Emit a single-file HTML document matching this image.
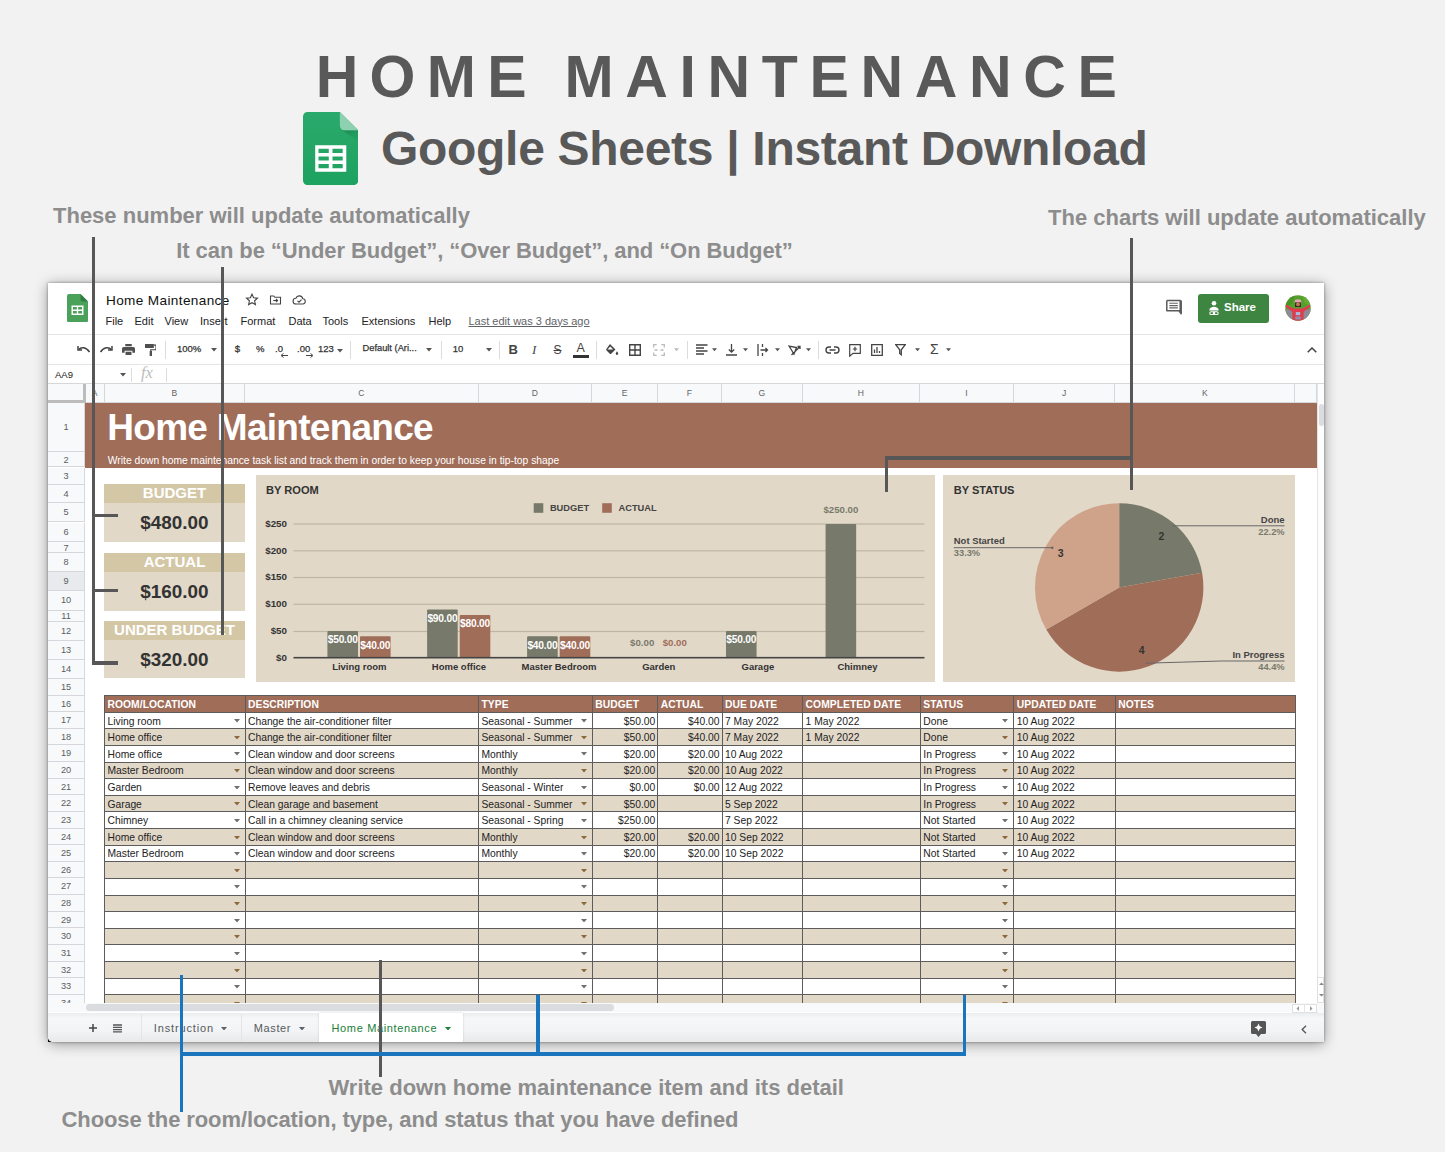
<!DOCTYPE html><html><head><meta charset="utf-8"><title>Home Maintenance</title><style>
*{box-sizing:border-box;margin:0;padding:0}
html,body{width:1445px;height:1152px;overflow:hidden}
body{background:#f2f2f2;font-family:"Liberation Sans",sans-serif;position:relative;color:#222}
.abs{position:absolute}
.t{position:absolute;white-space:nowrap;line-height:1}
.ann{position:absolute;white-space:nowrap;font-weight:bold;color:#8d8d8d;font-size:22px;line-height:1}
.ln{position:absolute;background:#575757}
.bl{position:absolute;background:#1b75bc}
#win{position:absolute;left:48px;top:283px;width:1276px;height:759px;background:#fff;box-shadow:0 0 3px rgba(0,0,0,.4),0 2px 14px rgba(0,0,0,.38);overflow:hidden;border-bottom-left-radius:5px}
#win .t{color:#222}
.menu{font-size:11px;color:#222;top:32.5px}
.hl{position:absolute;left:0;width:1276px;height:1px;background:#e3e5e8}
.rh{position:absolute;left:0;width:37px;background:#f8f9fa;border-bottom:1px solid #d5d7da;border-right:1px solid #d5d7da;color:#5a5d61;font-size:9.2px;text-align:center}
.ch{position:absolute;top:101px;height:19px;background:#f8f9fa;border-right:1px solid #d5d7da;border-bottom:1px solid #d5d7da;color:#5f6368;font-size:8.5px;text-align:center;line-height:18px}
.cardh{position:absolute;left:56px;width:141px;background:#d4c7a6;color:#fff;font-weight:bold;font-size:15px;text-align:center}
.cardb{position:absolute;left:56px;width:141px;background:#e2d8c8;color:#333;font-weight:bold;font-size:18.9px;text-align:center}
.cell{position:absolute;font-size:10.3px;white-space:nowrap;line-height:1;color:#222}
</style></head><body>
<div class="t" id="ttl" style="left:315.7px;top:48px;font-size:59px;font-weight:bold;color:#595959;letter-spacing:11.3px">HOME</div>
<div class="t" id="ttl2" style="left:564.5px;top:48px;font-size:59px;font-weight:bold;color:#595959;letter-spacing:11.65px">MAINTENANCE</div>
<svg class="abs" style="left:303px;top:111.6px" width="55.2" height="73.1" viewBox="0 0 55.2 73.1">
<defs><linearGradient id="gsh" x1="0" y1="0" x2="0" y2="1"><stop offset="0" stop-color="#2aa96c"/><stop offset="1" stop-color="#1ea25f"/></linearGradient>
<linearGradient id="gfd" x1="0.2" y1="0" x2="0.8" y2="1"><stop offset="0" stop-color="#137a45" stop-opacity=".55"/><stop offset="1" stop-color="#137a45" stop-opacity="0"/></linearGradient></defs>
<path d="M4.500 0H36.900L55.200 18.300V68.600a4.500 4.500 0 0 1-4.500 4.500H4.500a4.500 4.500 0 0 1-4.500-4.500V4.500a4.500 4.500 0 0 1 4.500-4.500z" fill="url(#gsh)"/>
<path d="M38.500 18.300H55.200V30L40 18.600z" fill="url(#gfd)"/>
<path d="M36.900 0L55.200 18.300H41.400a4.500 4.500 0 0 1-4.500-4.500z" fill="#8ed1b1"/>
<path d="M12.200 33.300h31.100v26.500H12.200zM15.500 36.800V41h10.300v-4.200zm14 0V41h10.200v-4.200zM15.500 44.500v4h10.300v-4zm14 0v4h10.200v-4zM15.500 52.100v4.100h10.300v-4.100zm14 0v4.100h10.200v-4.100z" fill="#fff" fill-rule="evenodd"/>
</svg>
<div class="t" id="sub" style="left:381px;top:125.2px;font-size:48px;font-weight:bold;color:#595959;letter-spacing:-0.3px">Google Sheets | Instant Download</div>
<div class="ann" id="a1" style="left:53px;top:205.4px">These number will update automatically</div>
<div class="ann" id="a2" style="left:176.3px;top:239.7px;letter-spacing:-0.08px">It can be “Under Budget”, “Over Budget”, and “On Budget”</div>
<div class="ann" id="a3" style="left:1048px;top:206.7px">The charts will update automatically</div>
<div class="ann" id="a4" style="left:328.5px;top:1077.4px">Write down home maintenance item and its detail</div>
<div class="ann" id="a5" style="left:61.5px;top:1108.5px;letter-spacing:-0.1px">Choose the room/location, type, and status that you have defined</div>
<div class="abs" style="left:48px;top:1036px;width:5px;height:6px;background:#111"></div>
<div id="win">
<svg class="abs" style="left:18.5px;top:10.7px" width="21" height="28.400" viewBox="0 0 21 28.400">
<path d="M2 0H13.5L21 7.5V26.400a2 2 0 0 1-2 2H2a2 2 0 0 1-2-2V2a2 2 0 0 1 2-2z" fill="#4aa25a"/>
<path d="M13.5 0L21 7.5H15.5a2 2 0 0 1-2-2z" fill="#2f7d42"/>
<path d="M4.500 11.500h12V21h-12zM6 13v2.600h3.800V13zm5.200 0v2.600H15V13zM6 16.900v2.600h3.800v-2.600zm5.200 0v2.600H15v-2.600z" fill="#fff" fill-rule="evenodd"/>
</svg>
<div class="t" id="doct" style="left:58px;top:10.8px;font-size:13.6px;color:#111;letter-spacing:0.36px">Home Maintenance</div>
<svg class="abs" style="left:196px;top:9px" width="70" height="16" viewBox="0 0 70 16" fill="none" stroke="#444" stroke-width="1.1">
<path d="M8 2.2l1.6 3.6 3.9.4-2.9 2.6.8 3.8L8 10.7l-3.4 1.9.8-3.8-2.9-2.6 3.9-.4z"/>
<path d="M26.5 4h3.2l1.2 1.3h5.600v6.700h-10z"/><path d="M29.200 8.500h4.300m-1.600-1.700l1.700 1.700-1.700 1.700"/>
<path d="M52 12h6.500a2.600 2.600 0 0 0 .3-5.200 3.600 3.600 0 0 0-6.900-.6A2.900 2.900 0 0 0 52 12z"/><path d="M53.500 8.800l1.500 1.400 2.500-2.600"/>
</svg>
<div class="t menu" style="left:57.5px">File</div>
<div class="t menu" style="left:86.5px">Edit</div>
<div class="t menu" style="left:116.5px">View</div>
<div class="t menu" style="left:152px">Insert</div>
<div class="t menu" style="left:192.5px">Format</div>
<div class="t menu" style="left:240.5px">Data</div>
<div class="t menu" style="left:274.5px">Tools</div>
<div class="t menu" style="left:313.5px">Extensions</div>
<div class="t menu" style="left:380.5px">Help</div>
<div class="t menu" style="left:420.5px;color:#5f6368;text-decoration:underline">Last edit was 3 days ago</div>
<svg class="abs" style="left:1117px;top:15.500px" width="18" height="17" viewBox="0 0 18 17"><path d="M1.800 1.500h13.400v10.300h-1.200l2.200 2.900v-13.200M1.800 1.500v10.300h12.200" fill="none" stroke="#5a5a5a" stroke-width="1.500" stroke-linejoin="round"/><path d="M4.300 4.300h8.600M4.300 6.600h8.600M4.300 8.900h8.600" stroke="#666" stroke-width="1.100"/></svg>
<div class="abs" style="left:1150px;top:11px;width:71px;height:28.500px;background:#3d8541;border-radius:3px"></div>
<svg class="abs" style="left:1159px;top:17px" width="14" height="16" viewBox="0 0 14 16" fill="#fff"><circle cx="7" cy="3.200" r="2.300"/><path d="M2.300 10.500c0-2.600 2.300-3.800 4.700-3.800s4.700 1.200 4.700 3.800z"/><path d="M4.200 11.300h5.600a1.900 1.900 0 0 1 0 3.800H4.200a1.900 1.900 0 0 1 0-3.800zm.1 1a.9.900 0 0 0 0 1.800h1.600v-1.800zm3.800 0v1.800h1.600a.9.900 0 0 0 0-1.800z" fill-rule="evenodd"/></svg>
<div class="t" style="left:1176px;top:19px;font-size:11.500px;font-weight:bold;color:#fff !important"><span style="color:#fff">Share</span></div>
<svg class="abs" style="left:1236.500px;top:12px" width="26" height="26" viewBox="0 0 26 26"><defs><clipPath id="av"><circle cx="13" cy="13" r="12.700"/></clipPath></defs><g clip-path="url(#av)"><rect width="26" height="26" fill="#55a02c"/><path d="M0 0h10l-3 9-7 3z" fill="#4a9424"/><path d="M17 0h9v11l-6-3z" fill="#63ad35"/><path d="M0 14l7 1 1 11H0z" fill="#8f8a96"/><path d="M26 14l-7 1-1 11h8z" fill="#8f8a96"/><path d="M1 9.500l7.500 4h9l7.500-4 .5 2-7 5.500V26h-11v-9L.5 11.500z" fill="#e23a50"/><path d="M10 9.500a3 3.400 0 0 1 6 0v2.500h-6z" fill="#3a2620"/><circle cx="13" cy="9.300" r="2" fill="#b9785a"/><path d="M9.300 7.200h7.400l-1.200-2.800h-5z" fill="#e9a3b4"/><rect x="10.800" y="17" width="4.400" height="3.200" fill="#a9b7dc"/><rect x="10.300" y="21.500" width="5.400" height="3" fill="#8d8fa8"/></g></svg>
<div class="hl" style="top:50.5px"></div>
<div class="hl" style="top:81px"></div>
<div class="hl" style="top:100px;background:#d5d7da"></div>
<svg class="abs" style="left:29px;top:61.5px" width="14" height="10" viewBox="0 0 14 10" fill="none" stroke="#444" stroke-width="1.500"><path d="M1.500 4.500C4 2 9 1.500 12.500 7"/><path d="M1 1v4h4" stroke-linejoin="miter"/></svg>
<svg class="abs" style="left:51px;top:61.5px" width="14" height="10" viewBox="0 0 14 10" fill="none" stroke="#444" stroke-width="1.500"><path d="M12.500 4.500C10 2 5 1.500 1.500 7"/><path d="M13 1v4h-4"/></svg>
<svg class="abs" style="left:73.7px;top:60.5px" width="13" height="11.200" viewBox="0 0 14 12" fill="#505050"><path d="M3.500 0h7v2.500h-7z"/><path d="M1.800 3.300h10.400a1.800 1.800 0 0 1 1.800 1.800v4.400h-2.800v-2.200h-8.400v2.200H0V5.100a1.800 1.800 0 0 1 1.800-1.800z"/><path d="M3.800 8.200h6.400V12H3.800z"/></svg>
<svg class="abs" style="left:97.3px;top:60.5px" width="11.200" height="12.200" viewBox="0 0 12 13" fill="#505050"><path d="M0 0h9.500v4.200H0z"/><path d="M9.500 1.200h2.300v5H6.200v2" fill="none" stroke="#444" stroke-width="1.200"/><path d="M5 7.500h2.500V13H5z"/></svg>
<div class="abs" style="left:116.5px;top:57.5px;width:1px;height:18px;background:#dadce0"></div>
<div class="t" style="left:129px;top:60.56px;font-size:9.5px;color:#333;-webkit-text-stroke:0.25px #333;">100%</div>
<svg class="abs" style="left:162.50px;top:65.00px" width="6" height="3.500" viewBox="0 0 6 3.500"><path d="M0 0h6L3 3.500z" fill="#555"/></svg>
<div class="abs" style="left:174px;top:57.5px;width:1px;height:18px;background:#dadce0"></div>
<div class="t" style="left:186.8px;top:60.51px;font-size:9.6px;color:#333;-webkit-text-stroke:0.25px #333;">$</div>
<div class="t" style="left:208px;top:60.56px;font-size:9.5px;color:#333;-webkit-text-stroke:0.25px #333;">%</div>
<div class="t" style="left:227px;top:60.56px;font-size:9.5px;color:#333;-webkit-text-stroke:0.25px #333;">.0</div>
<svg class="abs" style="left:232px;top:69.5px" width="8" height="5" viewBox="0 0 8 5"><path d="M8 2.500H2M3.500 0.500L1 2.500l2.500 2" fill="none" stroke="#444" stroke-width="1"/></svg>
<div class="t" style="left:249px;top:60.56px;font-size:9.5px;color:#333;-webkit-text-stroke:0.25px #333;">.00</div>
<svg class="abs" style="left:257.5px;top:69.5px" width="8" height="5" viewBox="0 0 8 5"><path d="M0 2.500h6M4.500 0.500L7 2.500l-2.500 2" fill="none" stroke="#444" stroke-width="1"/></svg>
<div class="t" style="left:270px;top:60.56px;font-size:9.5px;color:#333;-webkit-text-stroke:0.25px #333;">123</div>
<svg class="abs" style="left:288.50px;top:66.00px" width="6" height="3.500" viewBox="0 0 6 3.500"><path d="M0 0h6L3 3.500z" fill="#555"/></svg>
<div class="abs" style="left:302px;top:57.5px;width:1px;height:18px;background:#dadce0"></div>
<div class="t" style="left:314.5px;top:60.66px;font-size:9.3px;color:#333;-webkit-text-stroke:0.25px #333;">Default (Ari...</div>
<svg class="abs" style="left:378.20px;top:65.00px" width="6" height="3.500" viewBox="0 0 6 3.500"><path d="M0 0h6L3 3.500z" fill="#555"/></svg>
<div class="abs" style="left:392.5px;top:57.5px;width:1px;height:18px;background:#dadce0"></div>
<div class="t" style="left:404.7px;top:60.56px;font-size:9.5px;color:#333;-webkit-text-stroke:0.25px #333;">10</div>
<svg class="abs" style="left:438.00px;top:65.00px" width="6" height="3.500" viewBox="0 0 6 3.500"><path d="M0 0h6L3 3.500z" fill="#555"/></svg>
<div class="abs" style="left:451px;top:57.5px;width:1px;height:18px;background:#dadce0"></div>
<div class="t" style="left:460.5px;top:60.0px;font-size:13px;font-weight:bold;color:#444">B</div>
<div class="t" style="left:484px;top:60.0px;font-size:13px;font-style:italic;font-family:'Liberation Serif',serif;color:#444">I</div>
<div class="t" style="left:505.5px;top:60.5px;font-size:12px;color:#444;text-decoration:line-through">S</div>
<div class="t" style="left:528.5px;top:58.5px;font-size:12.500px;color:#444">A</div>
<div class="abs" style="left:525px;top:72.0px;width:16px;height:2.800px;background:#333"></div>
<div class="abs" style="left:548.4px;top:57.5px;width:1px;height:18px;background:#dadce0"></div>
<svg class="abs" style="left:556.5px;top:59.5px" width="14" height="13" viewBox="0 0 14 13"><path d="M5 1l5.500 5.500-4.300 4.200a1 1 0 0 1-1.400 0L1.400 7.300a1 1 0 0 1 0-1.400z" fill="#444"/><path d="M5.300 3.600L2.500 6.400h5.600z" fill="#fff"/><path d="M12 8.200s1.300 1.600 1.300 2.400a1.300 1.300 0 0 1-2.600 0c0-.8 1.300-2.400 1.300-2.400z" fill="#444"/></svg>
<svg class="abs" style="left:581px;top:60.5px" width="12" height="12" viewBox="0 0 12 12" fill="none" stroke="#444" stroke-width="1.400"><path d="M.7.700h10.600v10.600H.7zM6 .700v10.600M.7 6h10.600"/></svg>
<svg class="abs" style="left:605px;top:60.5px" width="12" height="12" viewBox="0 0 12 12" fill="none" stroke="#bbb" stroke-width="1.300"><path d="M.7 3.500V.700h3M8.300.700h3v2.800M.7 8.500v2.800h3M8.300 11.300h3V8.500M1.500 6h3M7.500 6h3"/></svg>
<svg class="abs" style="left:626.30px;top:65.00px" width="5" height="3.500" viewBox="0 0 6 3.500"><path d="M0 0h6L3 3.500z" fill="#bbb"/></svg>
<div class="abs" style="left:639.4px;top:57.5px;width:1px;height:18px;background:#dadce0"></div>
<svg class="abs" style="left:647.5px;top:61.0px" width="12" height="11" viewBox="0 0 12 11" stroke="#444" stroke-width="1.300"><path d="M0 1h11.500M0 4h8M0 7h11.500M0 10h8"/></svg>
<svg class="abs" style="left:663.90px;top:65.00px" width="5" height="3.500" viewBox="0 0 6 3.500"><path d="M0 0h6L3 3.500z" fill="#555"/></svg>
<svg class="abs" style="left:678px;top:60.5px" width="11" height="12" viewBox="0 0 11 12" fill="none" stroke="#444" stroke-width="1.300"><path d="M5.500 0v8M2.800 5.500l2.700 2.700 2.700-2.700M0 11h11"/></svg>
<svg class="abs" style="left:694.50px;top:65.00px" width="5" height="3.500" viewBox="0 0 6 3.500"><path d="M0 0h6L3 3.500z" fill="#555"/></svg>
<svg class="abs" style="left:709px;top:60.5px" width="12" height="12" viewBox="0 0 12 12" fill="none" stroke="#444" stroke-width="1.300"><path d="M1 0v12M5.500 0v3M5.500 9v3M3.500 6h7M8.500 4l2 2-2 2"/></svg>
<svg class="abs" style="left:726.50px;top:65.00px" width="5" height="3.500" viewBox="0 0 6 3.500"><path d="M0 0h6L3 3.500z" fill="#555"/></svg>
<svg class="abs" style="left:740px;top:60.5px" width="13" height="12" viewBox="0 0 13 12" fill="none" stroke="#444" stroke-width="1.300"><path d="M1 2l5 8 2.500-6.500zM3.500 11L12 2.500M9.500 2.500H12V5"/></svg>
<svg class="abs" style="left:757.50px;top:65.00px" width="5" height="3.500" viewBox="0 0 6 3.500"><path d="M0 0h6L3 3.500z" fill="#555"/></svg>
<div class="abs" style="left:769.5px;top:57.5px;width:1px;height:18px;background:#dadce0"></div>
<svg class="abs" style="left:777px;top:62.5px" width="15" height="8" viewBox="0 0 15 8" fill="none" stroke="#444" stroke-width="1.400"><path d="M6 1H4a3 3 0 0 0 0 6h2M9 1h2a3 3 0 0 1 0 6H9M4.500 4h6"/></svg>
<svg class="abs" style="left:801px;top:60.5px" width="12" height="13" viewBox="0 0 12 13" fill="none" stroke="#444" stroke-width="1.200"><path d="M.7.700h10.600v8.600H4L.7 12.200z"/><path d="M6 2.800v4.400M3.800 5h4.400"/></svg>
<svg class="abs" style="left:823px;top:60.5px" width="12" height="12" viewBox="0 0 12 12" fill="none" stroke="#444" stroke-width="1.300"><path d="M.7.700h10.600v10.600H.7z"/><path d="M3.500 9V5.500M6 9V3M8.500 9V7"/></svg>
<svg class="abs" style="left:847px;top:61.0px" width="11" height="12" viewBox="0 0 11 12" fill="none" stroke="#444" stroke-width="1.300"><path d="M.7.700h9.600L6.300 5.800v5L4.700 9.500V5.800z"/></svg>
<svg class="abs" style="left:866.50px;top:65.00px" width="5" height="3.500" viewBox="0 0 6 3.500"><path d="M0 0h6L3 3.500z" fill="#555"/></svg>
<div class="t" style="left:882px;top:59.0px;font-size:14px;color:#444">Σ</div>
<svg class="abs" style="left:898.00px;top:65.00px" width="5" height="3.500" viewBox="0 0 6 3.500"><path d="M0 0h6L3 3.500z" fill="#555"/></svg>
<svg class="abs" style="left:1259px;top:63.5px" width="10" height="6" viewBox="0 0 10 6" fill="none" stroke="#444" stroke-width="1.500"><path d="M.7 5.300L5 1l4.300 4.300"/></svg>
<div class="t" style="left:7px;top:87.0px;font-size:9.500px;color:#222">AA9</div>
<svg class="abs" style="left:71.50px;top:90.00px" width="6" height="3.500" viewBox="0 0 6 3.500"><path d="M0 0h6L3 3.500z" fill="#555"/></svg>
<div class="abs" style="left:83px;top:84.5px;width:1px;height:14px;background:#dadce0"></div>
<div class="t" style="left:93px;top:82.0px;font-size:16.500px;font-style:italic;font-family:'Liberation Serif',serif;color:#bbb"><span style="color:#bbb">fx</span></div>
<div class="abs" style="left:117.5px;top:84.5px;width:1px;height:14px;background:#dadce0"></div>
<div class="abs" style="left:0;top:100.5px;width:1276px;height:19.500px;background:#f8f9fa"></div>
<div class="abs" style="left:0;top:100.5px;width:37.500px;height:19.500px;background:#f8f9fa;border-right:3.500px solid #bcbcbc;border-bottom:3.500px solid #bcbcbc"></div>
<div class="ch" style="left:37.5px;width:19.0px;top:100.5px;height:19.500px">A</div>
<div class="ch" style="left:56.5px;width:140.5px;top:100.5px;height:19.500px">B</div>
<div class="ch" style="left:197px;width:233.5px;top:100.5px;height:19.500px">C</div>
<div class="ch" style="left:430.5px;width:113.8px;top:100.5px;height:19.500px">D</div>
<div class="ch" style="left:544.3px;width:65.5px;top:100.5px;height:19.500px">E</div>
<div class="ch" style="left:609.8px;width:64.2px;top:100.5px;height:19.500px">F</div>
<div class="ch" style="left:674px;width:80.6px;top:100.5px;height:19.500px">G</div>
<div class="ch" style="left:754.6px;width:117.7px;top:100.5px;height:19.500px">H</div>
<div class="ch" style="left:872.3px;width:93.5px;top:100.5px;height:19.500px">I</div>
<div class="ch" style="left:965.8px;width:101.5px;top:100.5px;height:19.500px">J</div>
<div class="ch" style="left:1067.3px;width:180.0px;top:100.5px;height:19.500px">K</div>
<div class="ch" style="left:1247.3px;width:21.7px;top:100.5px;height:19.500px"></div>
<div class="rh" style="top:120px;height:48.6px;line-height:49.1px;background:#f8f9fa">1</div>
<div class="rh" style="top:168.6px;height:15.9px;line-height:16.4px;background:#f8f9fa">2</div>
<div class="rh" style="top:184.5px;height:17.0px;line-height:17.5px;background:#f8f9fa">3</div>
<div class="rh" style="top:201.5px;height:18.7px;line-height:19.2px;background:#f8f9fa">4</div>
<div class="rh" style="top:220.2px;height:19.3px;line-height:19.8px;background:#f8f9fa">5</div>
<div class="rh" style="top:239.5px;height:19.2px;line-height:19.7px;background:#f8f9fa">6</div>
<div class="rh" style="top:258.7px;height:11.5px;line-height:12.0px;background:#f8f9fa">7</div>
<div class="rh" style="top:270.2px;height:18.8px;line-height:19.3px;background:#f8f9fa">8</div>
<div class="rh" style="top:289px;height:19.2px;line-height:19.7px;background:#e8eaed">9</div>
<div class="rh" style="top:308.2px;height:19.4px;line-height:19.9px;background:#f8f9fa">10</div>
<div class="rh" style="top:327.6px;height:11.0px;line-height:11.5px;background:#f8f9fa">11</div>
<div class="rh" style="top:338.6px;height:19.0px;line-height:19.5px;background:#f8f9fa">12</div>
<div class="rh" style="top:357.6px;height:19.0px;line-height:19.5px;background:#f8f9fa">13</div>
<div class="rh" style="top:376.6px;height:19.1px;line-height:19.6px;background:#f8f9fa">14</div>
<div class="rh" style="top:395.7px;height:16.9px;line-height:17.4px;background:#f8f9fa">15</div>
<div class="rh" style="top:412.6px;height:16.62px;line-height:17.12px;background:#f8f9fa">16</div>
<div class="rh" style="top:429.22px;height:16.62px;line-height:17.12px;background:#f8f9fa">17</div>
<div class="rh" style="top:445.84px;height:16.62px;line-height:17.12px;background:#f8f9fa">18</div>
<div class="rh" style="top:462.46px;height:16.62px;line-height:17.12px;background:#f8f9fa">19</div>
<div class="rh" style="top:479.08px;height:16.62px;line-height:17.12px;background:#f8f9fa">20</div>
<div class="rh" style="top:495.7px;height:16.62px;line-height:17.12px;background:#f8f9fa">21</div>
<div class="rh" style="top:512.32px;height:16.62px;line-height:17.12px;background:#f8f9fa">22</div>
<div class="rh" style="top:528.94px;height:16.62px;line-height:17.12px;background:#f8f9fa">23</div>
<div class="rh" style="top:545.56px;height:16.62px;line-height:17.12px;background:#f8f9fa">24</div>
<div class="rh" style="top:562.18px;height:16.62px;line-height:17.12px;background:#f8f9fa">25</div>
<div class="rh" style="top:578.8px;height:16.62px;line-height:17.12px;background:#f8f9fa">26</div>
<div class="rh" style="top:595.42px;height:16.62px;line-height:17.12px;background:#f8f9fa">27</div>
<div class="rh" style="top:612.04px;height:16.62px;line-height:17.12px;background:#f8f9fa">28</div>
<div class="rh" style="top:628.66px;height:16.62px;line-height:17.12px;background:#f8f9fa">29</div>
<div class="rh" style="top:645.28px;height:16.62px;line-height:17.12px;background:#f8f9fa">30</div>
<div class="rh" style="top:661.9px;height:16.62px;line-height:17.12px;background:#f8f9fa">31</div>
<div class="rh" style="top:678.52px;height:16.62px;line-height:17.12px;background:#f8f9fa">32</div>
<div class="rh" style="top:695.14px;height:16.62px;line-height:17.12px;background:#f8f9fa">33</div>
<div class="rh" style="top:711.76px;height:16.62px;line-height:17.12px;background:#f8f9fa">34</div>
<div class="abs" style="left:37px;top:120.3px;width:1232px;height:64.70px;background:#a06d59"></div>
<div class="t" id="bt" style="left:59.3px;top:126.3px;font-size:37px;font-weight:bold;letter-spacing:-0.72px"><span style="color:#fff">Home Maintenance</span></div>
<div class="t" id="bs" style="left:59.8px;top:172.8px;font-size:10.300px"><span style="color:#fff">Write down home maintenance task list and track them in order to keep your house in tip-top shape</span></div>
<div class="cardh" style="top:201px;height:19.2px;line-height:18.2px">BUDGET</div>
<div class="cardb" style="top:220.2px;height:38.8px;line-height:39.8px">$480.00</div>
<div class="cardh" style="top:270.2px;height:18.8px;line-height:17.8px">ACTUAL</div>
<div class="cardb" style="top:289px;height:38.7px;line-height:39.7px">$160.00</div>
<div class="cardh" style="top:338.2px;height:19.0px;line-height:18.0px">UNDER BUDGET</div>
<div class="cardb" style="top:357.2px;height:38.1px;line-height:39.1px">$320.00</div>
<svg class="abs" style="left:207.5px;top:191.8px" width="679.20" height="207.20" viewBox="255.5 474.8 679.20 207.20" font-family="Liberation Sans, sans-serif" font-weight="bold"><rect x="255.5" y="474.8" width="679.20" height="207.20" fill="#e2d8c8"/><text x="265.500" y="493.700" font-size="11.100" fill="#333">BY ROOM</text><rect x="533.200" y="503" width="9.600" height="9.600" fill="#777a6a"/><text x="549.400" y="510.600" font-size="9.300" fill="#444">BUDGET</text><rect x="601.700" y="503" width="9.600" height="9.600" fill="#a06d59"/><text x="618" y="510.600" font-size="9.300" fill="#444">ACTUAL</text><rect x="293" y="523.20" width="631" height="1.200" fill="#beb5a4"/><text x="286.500" y="526.80" font-size="9.800" fill="#333" text-anchor="end">$250</text><rect x="293" y="550.00" width="631" height="1.200" fill="#beb5a4"/><text x="286.500" y="553.60" font-size="9.800" fill="#333" text-anchor="end">$200</text><rect x="293" y="576.70" width="631" height="1.200" fill="#beb5a4"/><text x="286.500" y="580.30" font-size="9.800" fill="#333" text-anchor="end">$150</text><rect x="293" y="603.50" width="631" height="1.200" fill="#beb5a4"/><text x="286.500" y="607.10" font-size="9.800" fill="#333" text-anchor="end">$100</text><rect x="293" y="630.70" width="631" height="1.200" fill="#beb5a4"/><text x="286.500" y="634.30" font-size="9.800" fill="#333" text-anchor="end">$50</text><text x="286.500" y="660.50" font-size="9.800" fill="#333" text-anchor="end">$0</text><text x="358.8" y="670.200" font-size="9.500" fill="#333" text-anchor="middle">Living room</text><rect x="326.90" y="630.76" width="30.60" height="26.74" rx="1" fill="#777a6a"/><text x="342.20" y="643.06" font-size="10.200" fill="#fff" text-anchor="middle" letter-spacing="-0.2">$50.00</text><rect x="359.50" y="636.11" width="30.60" height="21.39" rx="1" fill="#a06d59"/><text x="374.80" y="648.41" font-size="10.200" fill="#fff" text-anchor="middle" letter-spacing="-0.2">$40.00</text><text x="458.5" y="670.200" font-size="9.500" fill="#333" text-anchor="middle">Home office</text><rect x="426.60" y="609.37" width="30.60" height="48.13" rx="1" fill="#777a6a"/><text x="441.90" y="621.67" font-size="10.200" fill="#fff" text-anchor="middle" letter-spacing="-0.2">$90.00</text><rect x="459.20" y="614.72" width="30.60" height="42.78" rx="1" fill="#a06d59"/><text x="474.50" y="627.02" font-size="10.200" fill="#fff" text-anchor="middle" letter-spacing="-0.2">$80.00</text><text x="558.5" y="670.200" font-size="9.500" fill="#333" text-anchor="middle">Master Bedroom</text><rect x="526.60" y="636.11" width="30.60" height="21.39" rx="1" fill="#777a6a"/><text x="541.90" y="648.41" font-size="10.200" fill="#fff" text-anchor="middle" letter-spacing="-0.2">$40.00</text><rect x="559.20" y="636.11" width="30.60" height="21.39" rx="1" fill="#a06d59"/><text x="574.50" y="648.41" font-size="10.200" fill="#fff" text-anchor="middle" letter-spacing="-0.2">$40.00</text><text x="658.3" y="670.200" font-size="9.500" fill="#333" text-anchor="middle">Garden</text><text x="641.70" y="646.200" font-size="9.700" fill="#777a6a" text-anchor="middle">$0.00</text><text x="674.30" y="646.200" font-size="9.700" fill="#a06d59" text-anchor="middle">$0.00</text><text x="757.4" y="670.200" font-size="9.500" fill="#333" text-anchor="middle">Garage</text><rect x="725.50" y="630.76" width="30.60" height="26.74" rx="1" fill="#777a6a"/><text x="740.80" y="643.06" font-size="10.200" fill="#fff" text-anchor="middle" letter-spacing="-0.2">$50.00</text><text x="857" y="670.200" font-size="9.500" fill="#333" text-anchor="middle">Chimney</text><rect x="825.10" y="523.80" width="30.60" height="133.70" rx="1" fill="#777a6a"/><text x="840.40" y="513.100" font-size="9.650" fill="#777a6a" text-anchor="middle">$250.00</text><rect x="293" y="656.700" width="631" height="1.600" fill="#444"/></svg>
<svg class="abs" style="left:895.2px;top:191.8px" width="352.10" height="207.20" viewBox="943.2 474.8 352.10 207.20" font-family="Liberation Sans, sans-serif" font-weight="bold"><rect x="943.2" y="474.8" width="352.10" height="207.20" fill="#e2d8c8"/><text x="954" y="493.700" font-size="11.050" fill="#333">BY STATUS</text><path d="M1119.4 587.3L1119.40 503.10A84.2 84.2 0 0 1 1202.32 572.68z" fill="#777a6a"/><path d="M1119.4 587.3L1202.32 572.68A84.2 84.2 0 0 1 1046.48 629.40z" fill="#a06d59"/><path d="M1119.4 587.3L1046.48 629.40A84.2 84.2 0 0 1 1119.40 503.10z" fill="#cfa28a"/><text x="1161.700" y="540" font-size="10.500" fill="#333" text-anchor="middle">2</text><text x="1061" y="557.200" font-size="10.500" fill="#333" text-anchor="middle">3</text><text x="1142" y="654.200" font-size="10.500" fill="#333" text-anchor="middle">4</text><text x="1284.800" y="523.300" font-size="9.500" fill="#444" text-anchor="end">Done</text><path d="M1173 525.600H1284.800" stroke="#666" stroke-width="1"/><text x="1284.800" y="535.200" font-size="9.300" fill="#777a6a" text-anchor="end">22.2%</text><text x="1284.800" y="658" font-size="9.500" fill="#444" text-anchor="end">In Progress</text><path d="M1146 663L1222 660.800H1284.800" stroke="#666" stroke-width="1" fill="none"/><text x="1284.800" y="670" font-size="9.300" fill="#777a6a" text-anchor="end">44.4%</text><text x="954" y="543.800" font-size="9.450" fill="#444">Not Started</text><path d="M954 547.500H1052.500" stroke="#666" stroke-width="1"/><circle cx="1052.500" cy="547.500" r="1.200" fill="#666"/><text x="954" y="555.700" font-size="9.300" fill="#777a6a">33.3%</text></svg>
<div class="abs" style="left:56.5px;top:412.6px;width:1190.80px;height:17.12px;background:#a06d59"></div>
<div class="cell" style="left:59.5px;top:416.8px;font-weight:bold;font-size:10.300px;letter-spacing:0.05px"><span style="color:#fff">ROOM/LOCATION</span></div>
<div class="cell" style="left:200px;top:416.8px;font-weight:bold;font-size:10.300px;letter-spacing:0.05px"><span style="color:#fff">DESCRIPTION</span></div>
<div class="cell" style="left:433.5px;top:416.8px;font-weight:bold;font-size:10.300px;letter-spacing:0.05px"><span style="color:#fff">TYPE</span></div>
<div class="cell" style="left:547.3px;top:416.8px;font-weight:bold;font-size:10.300px;letter-spacing:0.05px"><span style="color:#fff">BUDGET</span></div>
<div class="cell" style="left:612.8px;top:416.8px;font-weight:bold;font-size:10.300px;letter-spacing:0.05px"><span style="color:#fff">ACTUAL</span></div>
<div class="cell" style="left:677px;top:416.8px;font-weight:bold;font-size:10.300px;letter-spacing:0.05px"><span style="color:#fff">DUE DATE</span></div>
<div class="cell" style="left:757.6px;top:416.8px;font-weight:bold;font-size:10.300px;letter-spacing:0.05px"><span style="color:#fff">COMPLETED DATE</span></div>
<div class="cell" style="left:875.3px;top:416.8px;font-weight:bold;font-size:10.300px;letter-spacing:0.05px"><span style="color:#fff">STATUS</span></div>
<div class="cell" style="left:968.8px;top:416.8px;font-weight:bold;font-size:10.300px;letter-spacing:0.05px"><span style="color:#fff">UPDATED DATE</span></div>
<div class="cell" style="left:1070.3px;top:416.8px;font-weight:bold;font-size:10.300px;letter-spacing:0.05px"><span style="color:#fff">NOTES</span></div>
<svg class="abs" style="left:186.00px;top:436.22px" width="6" height="3.500" viewBox="0 0 6 3.500"><path d="M0 0h6L3 3.500z" fill="#707070"/></svg>
<svg class="abs" style="left:532.50px;top:436.22px" width="6" height="3.500" viewBox="0 0 6 3.500"><path d="M0 0h6L3 3.500z" fill="#707070"/></svg>
<svg class="abs" style="left:954.00px;top:436.22px" width="6" height="3.500" viewBox="0 0 6 3.500"><path d="M0 0h6L3 3.500z" fill="#707070"/></svg>
<div class="cell" style="left:59.50px;top:433.52px">Living room</div>
<div class="cell" style="left:200.00px;top:433.52px">Change the air-conditioner filter</div>
<div class="cell" style="left:433.50px;top:433.52px">Seasonal - Summer</div>
<div class="cell" style="right:668.70px;top:433.52px">$50.00</div>
<div class="cell" style="right:604.50px;top:433.52px">$40.00</div>
<div class="cell" style="left:677.00px;top:433.52px">7 May 2022</div>
<div class="cell" style="left:757.60px;top:433.52px">1 May 2022</div>
<div class="cell" style="left:875.30px;top:433.52px">Done</div>
<div class="cell" style="left:968.80px;top:433.52px">10 Aug 2022</div>
<div class="abs" style="left:56.5px;top:445.84px;width:1190.80px;height:16.92px;background:#e2d8c8"></div>
<svg class="abs" style="left:186.00px;top:452.84px" width="6" height="3.500" viewBox="0 0 6 3.500"><path d="M0 0h6L3 3.500z" fill="#8a6a3a"/></svg>
<svg class="abs" style="left:532.50px;top:452.84px" width="6" height="3.500" viewBox="0 0 6 3.500"><path d="M0 0h6L3 3.500z" fill="#8a6a3a"/></svg>
<svg class="abs" style="left:954.00px;top:452.84px" width="6" height="3.500" viewBox="0 0 6 3.500"><path d="M0 0h6L3 3.500z" fill="#8a6a3a"/></svg>
<div class="cell" style="left:59.50px;top:450.14px">Home office</div>
<div class="cell" style="left:200.00px;top:450.14px">Change the air-conditioner filter</div>
<div class="cell" style="left:433.50px;top:450.14px">Seasonal - Summer</div>
<div class="cell" style="right:668.70px;top:450.14px">$50.00</div>
<div class="cell" style="right:604.50px;top:450.14px">$40.00</div>
<div class="cell" style="left:677.00px;top:450.14px">7 May 2022</div>
<div class="cell" style="left:757.60px;top:450.14px">1 May 2022</div>
<div class="cell" style="left:875.30px;top:450.14px">Done</div>
<div class="cell" style="left:968.80px;top:450.14px">10 Aug 2022</div>
<svg class="abs" style="left:186.00px;top:469.46px" width="6" height="3.500" viewBox="0 0 6 3.500"><path d="M0 0h6L3 3.500z" fill="#707070"/></svg>
<svg class="abs" style="left:532.50px;top:469.46px" width="6" height="3.500" viewBox="0 0 6 3.500"><path d="M0 0h6L3 3.500z" fill="#707070"/></svg>
<svg class="abs" style="left:954.00px;top:469.46px" width="6" height="3.500" viewBox="0 0 6 3.500"><path d="M0 0h6L3 3.500z" fill="#707070"/></svg>
<div class="cell" style="left:59.50px;top:466.76px">Home office</div>
<div class="cell" style="left:200.00px;top:466.76px">Clean window and door screens</div>
<div class="cell" style="left:433.50px;top:466.76px">Monthly</div>
<div class="cell" style="right:668.70px;top:466.76px">$20.00</div>
<div class="cell" style="right:604.50px;top:466.76px">$20.00</div>
<div class="cell" style="left:677.00px;top:466.76px">10 Aug 2022</div>
<div class="cell" style="left:875.30px;top:466.76px">In Progress</div>
<div class="cell" style="left:968.80px;top:466.76px">10 Aug 2022</div>
<div class="abs" style="left:56.5px;top:479.08px;width:1190.80px;height:16.92px;background:#e2d8c8"></div>
<svg class="abs" style="left:186.00px;top:486.08px" width="6" height="3.500" viewBox="0 0 6 3.500"><path d="M0 0h6L3 3.500z" fill="#8a6a3a"/></svg>
<svg class="abs" style="left:532.50px;top:486.08px" width="6" height="3.500" viewBox="0 0 6 3.500"><path d="M0 0h6L3 3.500z" fill="#8a6a3a"/></svg>
<svg class="abs" style="left:954.00px;top:486.08px" width="6" height="3.500" viewBox="0 0 6 3.500"><path d="M0 0h6L3 3.500z" fill="#8a6a3a"/></svg>
<div class="cell" style="left:59.50px;top:483.38px">Master Bedroom</div>
<div class="cell" style="left:200.00px;top:483.38px">Clean window and door screens</div>
<div class="cell" style="left:433.50px;top:483.38px">Monthly</div>
<div class="cell" style="right:668.70px;top:483.38px">$20.00</div>
<div class="cell" style="right:604.50px;top:483.38px">$20.00</div>
<div class="cell" style="left:677.00px;top:483.38px">10 Aug 2022</div>
<div class="cell" style="left:875.30px;top:483.38px">In Progress</div>
<div class="cell" style="left:968.80px;top:483.38px">10 Aug 2022</div>
<svg class="abs" style="left:186.00px;top:502.70px" width="6" height="3.500" viewBox="0 0 6 3.500"><path d="M0 0h6L3 3.500z" fill="#707070"/></svg>
<svg class="abs" style="left:532.50px;top:502.70px" width="6" height="3.500" viewBox="0 0 6 3.500"><path d="M0 0h6L3 3.500z" fill="#707070"/></svg>
<svg class="abs" style="left:954.00px;top:502.70px" width="6" height="3.500" viewBox="0 0 6 3.500"><path d="M0 0h6L3 3.500z" fill="#707070"/></svg>
<div class="cell" style="left:59.50px;top:500.00px">Garden</div>
<div class="cell" style="left:200.00px;top:500.00px">Remove leaves and debris</div>
<div class="cell" style="left:433.50px;top:500.00px">Seasonal - Winter</div>
<div class="cell" style="right:668.70px;top:500.00px">$0.00</div>
<div class="cell" style="right:604.50px;top:500.00px">$0.00</div>
<div class="cell" style="left:677.00px;top:500.00px">12 Aug 2022</div>
<div class="cell" style="left:875.30px;top:500.00px">In Progress</div>
<div class="cell" style="left:968.80px;top:500.00px">10 Aug 2022</div>
<div class="abs" style="left:56.5px;top:512.32px;width:1190.80px;height:16.92px;background:#e2d8c8"></div>
<svg class="abs" style="left:186.00px;top:519.32px" width="6" height="3.500" viewBox="0 0 6 3.500"><path d="M0 0h6L3 3.500z" fill="#8a6a3a"/></svg>
<svg class="abs" style="left:532.50px;top:519.32px" width="6" height="3.500" viewBox="0 0 6 3.500"><path d="M0 0h6L3 3.500z" fill="#8a6a3a"/></svg>
<svg class="abs" style="left:954.00px;top:519.32px" width="6" height="3.500" viewBox="0 0 6 3.500"><path d="M0 0h6L3 3.500z" fill="#8a6a3a"/></svg>
<div class="cell" style="left:59.50px;top:516.62px">Garage</div>
<div class="cell" style="left:200.00px;top:516.62px">Clean garage and basement</div>
<div class="cell" style="left:433.50px;top:516.62px">Seasonal - Summer</div>
<div class="cell" style="right:668.70px;top:516.62px">$50.00</div>
<div class="cell" style="left:677.00px;top:516.62px">5 Sep 2022</div>
<div class="cell" style="left:875.30px;top:516.62px">In Progress</div>
<div class="cell" style="left:968.80px;top:516.62px">10 Aug 2022</div>
<svg class="abs" style="left:186.00px;top:535.94px" width="6" height="3.500" viewBox="0 0 6 3.500"><path d="M0 0h6L3 3.500z" fill="#707070"/></svg>
<svg class="abs" style="left:532.50px;top:535.94px" width="6" height="3.500" viewBox="0 0 6 3.500"><path d="M0 0h6L3 3.500z" fill="#707070"/></svg>
<svg class="abs" style="left:954.00px;top:535.94px" width="6" height="3.500" viewBox="0 0 6 3.500"><path d="M0 0h6L3 3.500z" fill="#707070"/></svg>
<div class="cell" style="left:59.50px;top:533.24px">Chimney</div>
<div class="cell" style="left:200.00px;top:533.24px">Call in a chimney cleaning service</div>
<div class="cell" style="left:433.50px;top:533.24px">Seasonal - Spring</div>
<div class="cell" style="right:668.70px;top:533.24px">$250.00</div>
<div class="cell" style="left:677.00px;top:533.24px">7 Sep 2022</div>
<div class="cell" style="left:875.30px;top:533.24px">Not Started</div>
<div class="cell" style="left:968.80px;top:533.24px">10 Aug 2022</div>
<div class="abs" style="left:56.5px;top:545.56px;width:1190.80px;height:16.92px;background:#e2d8c8"></div>
<svg class="abs" style="left:186.00px;top:552.56px" width="6" height="3.500" viewBox="0 0 6 3.500"><path d="M0 0h6L3 3.500z" fill="#8a6a3a"/></svg>
<svg class="abs" style="left:532.50px;top:552.56px" width="6" height="3.500" viewBox="0 0 6 3.500"><path d="M0 0h6L3 3.500z" fill="#8a6a3a"/></svg>
<svg class="abs" style="left:954.00px;top:552.56px" width="6" height="3.500" viewBox="0 0 6 3.500"><path d="M0 0h6L3 3.500z" fill="#8a6a3a"/></svg>
<div class="cell" style="left:59.50px;top:549.86px">Home office</div>
<div class="cell" style="left:200.00px;top:549.86px">Clean window and door screens</div>
<div class="cell" style="left:433.50px;top:549.86px">Monthly</div>
<div class="cell" style="right:668.70px;top:549.86px">$20.00</div>
<div class="cell" style="right:604.50px;top:549.86px">$20.00</div>
<div class="cell" style="left:677.00px;top:549.86px">10 Sep 2022</div>
<div class="cell" style="left:875.30px;top:549.86px">Not Started</div>
<div class="cell" style="left:968.80px;top:549.86px">10 Aug 2022</div>
<svg class="abs" style="left:186.00px;top:569.18px" width="6" height="3.500" viewBox="0 0 6 3.500"><path d="M0 0h6L3 3.500z" fill="#707070"/></svg>
<svg class="abs" style="left:532.50px;top:569.18px" width="6" height="3.500" viewBox="0 0 6 3.500"><path d="M0 0h6L3 3.500z" fill="#707070"/></svg>
<svg class="abs" style="left:954.00px;top:569.18px" width="6" height="3.500" viewBox="0 0 6 3.500"><path d="M0 0h6L3 3.500z" fill="#707070"/></svg>
<div class="cell" style="left:59.50px;top:566.48px">Master Bedroom</div>
<div class="cell" style="left:200.00px;top:566.48px">Clean window and door screens</div>
<div class="cell" style="left:433.50px;top:566.48px">Monthly</div>
<div class="cell" style="right:668.70px;top:566.48px">$20.00</div>
<div class="cell" style="right:604.50px;top:566.48px">$20.00</div>
<div class="cell" style="left:677.00px;top:566.48px">10 Sep 2022</div>
<div class="cell" style="left:875.30px;top:566.48px">Not Started</div>
<div class="cell" style="left:968.80px;top:566.48px">10 Aug 2022</div>
<div class="abs" style="left:56.5px;top:578.80px;width:1190.80px;height:16.92px;background:#e2d8c8"></div>
<svg class="abs" style="left:186.00px;top:585.80px" width="6" height="3.500" viewBox="0 0 6 3.500"><path d="M0 0h6L3 3.500z" fill="#8a6a3a"/></svg>
<svg class="abs" style="left:532.50px;top:585.80px" width="6" height="3.500" viewBox="0 0 6 3.500"><path d="M0 0h6L3 3.500z" fill="#8a6a3a"/></svg>
<svg class="abs" style="left:954.00px;top:585.80px" width="6" height="3.500" viewBox="0 0 6 3.500"><path d="M0 0h6L3 3.500z" fill="#8a6a3a"/></svg>
<svg class="abs" style="left:186.00px;top:602.42px" width="6" height="3.500" viewBox="0 0 6 3.500"><path d="M0 0h6L3 3.500z" fill="#707070"/></svg>
<svg class="abs" style="left:532.50px;top:602.42px" width="6" height="3.500" viewBox="0 0 6 3.500"><path d="M0 0h6L3 3.500z" fill="#707070"/></svg>
<svg class="abs" style="left:954.00px;top:602.42px" width="6" height="3.500" viewBox="0 0 6 3.500"><path d="M0 0h6L3 3.500z" fill="#707070"/></svg>
<div class="abs" style="left:56.5px;top:612.04px;width:1190.80px;height:16.92px;background:#e2d8c8"></div>
<svg class="abs" style="left:186.00px;top:619.04px" width="6" height="3.500" viewBox="0 0 6 3.500"><path d="M0 0h6L3 3.500z" fill="#8a6a3a"/></svg>
<svg class="abs" style="left:532.50px;top:619.04px" width="6" height="3.500" viewBox="0 0 6 3.500"><path d="M0 0h6L3 3.500z" fill="#8a6a3a"/></svg>
<svg class="abs" style="left:954.00px;top:619.04px" width="6" height="3.500" viewBox="0 0 6 3.500"><path d="M0 0h6L3 3.500z" fill="#8a6a3a"/></svg>
<svg class="abs" style="left:186.00px;top:635.66px" width="6" height="3.500" viewBox="0 0 6 3.500"><path d="M0 0h6L3 3.500z" fill="#707070"/></svg>
<svg class="abs" style="left:532.50px;top:635.66px" width="6" height="3.500" viewBox="0 0 6 3.500"><path d="M0 0h6L3 3.500z" fill="#707070"/></svg>
<svg class="abs" style="left:954.00px;top:635.66px" width="6" height="3.500" viewBox="0 0 6 3.500"><path d="M0 0h6L3 3.500z" fill="#707070"/></svg>
<div class="abs" style="left:56.5px;top:645.28px;width:1190.80px;height:16.92px;background:#e2d8c8"></div>
<svg class="abs" style="left:186.00px;top:652.28px" width="6" height="3.500" viewBox="0 0 6 3.500"><path d="M0 0h6L3 3.500z" fill="#8a6a3a"/></svg>
<svg class="abs" style="left:532.50px;top:652.28px" width="6" height="3.500" viewBox="0 0 6 3.500"><path d="M0 0h6L3 3.500z" fill="#8a6a3a"/></svg>
<svg class="abs" style="left:954.00px;top:652.28px" width="6" height="3.500" viewBox="0 0 6 3.500"><path d="M0 0h6L3 3.500z" fill="#8a6a3a"/></svg>
<svg class="abs" style="left:186.00px;top:668.90px" width="6" height="3.500" viewBox="0 0 6 3.500"><path d="M0 0h6L3 3.500z" fill="#707070"/></svg>
<svg class="abs" style="left:532.50px;top:668.90px" width="6" height="3.500" viewBox="0 0 6 3.500"><path d="M0 0h6L3 3.500z" fill="#707070"/></svg>
<svg class="abs" style="left:954.00px;top:668.90px" width="6" height="3.500" viewBox="0 0 6 3.500"><path d="M0 0h6L3 3.500z" fill="#707070"/></svg>
<div class="abs" style="left:56.5px;top:678.52px;width:1190.80px;height:16.92px;background:#e2d8c8"></div>
<svg class="abs" style="left:186.00px;top:685.52px" width="6" height="3.500" viewBox="0 0 6 3.500"><path d="M0 0h6L3 3.500z" fill="#8a6a3a"/></svg>
<svg class="abs" style="left:532.50px;top:685.52px" width="6" height="3.500" viewBox="0 0 6 3.500"><path d="M0 0h6L3 3.500z" fill="#8a6a3a"/></svg>
<svg class="abs" style="left:954.00px;top:685.52px" width="6" height="3.500" viewBox="0 0 6 3.500"><path d="M0 0h6L3 3.500z" fill="#8a6a3a"/></svg>
<svg class="abs" style="left:186.00px;top:702.14px" width="6" height="3.500" viewBox="0 0 6 3.500"><path d="M0 0h6L3 3.500z" fill="#707070"/></svg>
<svg class="abs" style="left:532.50px;top:702.14px" width="6" height="3.500" viewBox="0 0 6 3.500"><path d="M0 0h6L3 3.500z" fill="#707070"/></svg>
<svg class="abs" style="left:954.00px;top:702.14px" width="6" height="3.500" viewBox="0 0 6 3.500"><path d="M0 0h6L3 3.500z" fill="#707070"/></svg>
<div class="abs" style="left:56.5px;top:711.76px;width:1190.80px;height:8.84px;background:#e2d8c8"></div>
<svg class="abs" style="left:186.00px;top:718.76px" width="6" height="3.500" viewBox="0 0 6 3.500"><path d="M0 0h6L3 3.500z" fill="#8a6a3a"/></svg>
<svg class="abs" style="left:532.50px;top:718.76px" width="6" height="3.500" viewBox="0 0 6 3.500"><path d="M0 0h6L3 3.500z" fill="#8a6a3a"/></svg>
<svg class="abs" style="left:954.00px;top:718.76px" width="6" height="3.500" viewBox="0 0 6 3.500"><path d="M0 0h6L3 3.500z" fill="#8a6a3a"/></svg>
<div class="abs" style="left:56.5px;top:412.10px;width:1191.30px;height:1px;background:#5c5c5c"></div>
<div class="abs" style="left:56.5px;top:428.72px;width:1191.30px;height:1px;background:#5c5c5c"></div>
<div class="abs" style="left:56.5px;top:445.34px;width:1191.30px;height:1px;background:#5c5c5c"></div>
<div class="abs" style="left:56.5px;top:461.96px;width:1191.30px;height:1px;background:#5c5c5c"></div>
<div class="abs" style="left:56.5px;top:478.58px;width:1191.30px;height:1px;background:#5c5c5c"></div>
<div class="abs" style="left:56.5px;top:495.20px;width:1191.30px;height:1px;background:#5c5c5c"></div>
<div class="abs" style="left:56.5px;top:511.82px;width:1191.30px;height:1px;background:#5c5c5c"></div>
<div class="abs" style="left:56.5px;top:528.44px;width:1191.30px;height:1px;background:#5c5c5c"></div>
<div class="abs" style="left:56.5px;top:545.06px;width:1191.30px;height:1px;background:#5c5c5c"></div>
<div class="abs" style="left:56.5px;top:561.68px;width:1191.30px;height:1px;background:#5c5c5c"></div>
<div class="abs" style="left:56.5px;top:578.30px;width:1191.30px;height:1px;background:#5c5c5c"></div>
<div class="abs" style="left:56.5px;top:594.92px;width:1191.30px;height:1px;background:#5c5c5c"></div>
<div class="abs" style="left:56.5px;top:611.54px;width:1191.30px;height:1px;background:#5c5c5c"></div>
<div class="abs" style="left:56.5px;top:628.16px;width:1191.30px;height:1px;background:#5c5c5c"></div>
<div class="abs" style="left:56.5px;top:644.78px;width:1191.30px;height:1px;background:#5c5c5c"></div>
<div class="abs" style="left:56.5px;top:661.40px;width:1191.30px;height:1px;background:#5c5c5c"></div>
<div class="abs" style="left:56.5px;top:678.02px;width:1191.30px;height:1px;background:#5c5c5c"></div>
<div class="abs" style="left:56.5px;top:694.64px;width:1191.30px;height:1px;background:#5c5c5c"></div>
<div class="abs" style="left:56.5px;top:711.26px;width:1191.30px;height:1px;background:#5c5c5c"></div>
<div class="abs" style="left:56.00px;top:412.10px;width:1px;height:308.20px;background:#5c5c5c"></div>
<div class="abs" style="left:196.50px;top:412.10px;width:1px;height:308.20px;background:#5c5c5c"></div>
<div class="abs" style="left:430.00px;top:412.10px;width:1px;height:308.20px;background:#5c5c5c"></div>
<div class="abs" style="left:543.80px;top:412.10px;width:1px;height:308.20px;background:#5c5c5c"></div>
<div class="abs" style="left:609.30px;top:412.10px;width:1px;height:308.20px;background:#5c5c5c"></div>
<div class="abs" style="left:673.50px;top:412.10px;width:1px;height:308.20px;background:#5c5c5c"></div>
<div class="abs" style="left:754.10px;top:412.10px;width:1px;height:308.20px;background:#5c5c5c"></div>
<div class="abs" style="left:871.80px;top:412.10px;width:1px;height:308.20px;background:#5c5c5c"></div>
<div class="abs" style="left:965.30px;top:412.10px;width:1px;height:308.20px;background:#5c5c5c"></div>
<div class="abs" style="left:1066.80px;top:412.10px;width:1px;height:308.20px;background:#5c5c5c"></div>
<div class="abs" style="left:1246.80px;top:412.10px;width:1px;height:308.20px;background:#5c5c5c"></div>
<div class="abs" style="left:1269px;top:100.5px;width:7px;height:629.0px;background:#fdfdfd;border-left:1px solid #e4e4e4"></div>
<div class="abs" style="left:1270.5px;top:121px;width:5px;height:22px;background:#dadce0;border-radius:3px"></div>
<div class="abs" style="left:0;top:720.3px;width:1276px;height:9.20px;background:#f8f9fa"></div>
<div class="abs" style="left:38px;top:721.3px;width:528px;height:7px;background:#dadce0;border-radius:4px"></div>
<div class="abs" style="left:1244px;top:720.5px;width:24.500px;height:9px;background:#fff;border:1px solid #e0e0e0"></div>
<div class="abs" style="left:1269px;top:694px;width:7px;height:26px;background:#fff;border:1px solid #e0e0e0"></div>
<svg class="abs" style="left:1246px;top:722.5px" width="22" height="5" viewBox="0 0 22 5" fill="#999"><path d="M5 0v5L2.500 2.500zM16 0v5L18.500 2.500z"/></svg><div class="abs" style="left:1256px;top:720.5px;width:1px;height:9px;background:#e4e4e4"></div>
<svg class="abs" style="left:1270.5px;top:697px" width="5" height="20" viewBox="0 0 5 20" fill="#888"><path d="M0 5h5L2.500 2.500zM0 14h5L2.500 16.500z"/></svg>
<div class="abs" style="left:0;top:729.5px;width:1276px;height:29.5px;background:linear-gradient(#ebeced,#f6f7f8 18%,#f3f4f5 60%,#e8e9eb)"></div>
<div class="abs" style="left:270.6px;top:729.5px;width:144.80px;height:29.5px;background:#fff;box-shadow:0 0 2px rgba(0,0,0,.18)"></div>
<div class="abs" style="left:93.2px;top:731px;width:1px;height:28px;background:#e4e5e7"></div>
<div class="abs" style="left:192.6px;top:731px;width:1px;height:28px;background:#e4e5e7"></div>
<svg class="abs" style="left:40.5px;top:740.8px" width="8" height="8" viewBox="0 0 8 8" stroke="#444" stroke-width="1.500"><path d="M4 0v8M0 4h8"/></svg>
<svg class="abs" style="left:65px;top:741.1px" width="9" height="9" viewBox="0 0 9 9" stroke="#555" stroke-width="1.300"><path d="M0 1h9M0 3.300h9M0 5.600h9M0 7.900h9"/></svg>
<div class="t" style="left:105.8px;top:739.8px;font-size:11px;letter-spacing:0.86px"><span style="color:#55595e">Instruction</span></div>
<svg class="abs" style="left:173px;top:743.6px" width="6" height="3.500" viewBox="0 0 6 3.500"><path d="M0 0h6L3 3.500z" fill="#5f6368"/></svg>
<div class="t" style="left:205.8px;top:739.8px;font-size:11px;letter-spacing:0.62px"><span style="color:#55595e">Master</span></div>
<svg class="abs" style="left:250.7px;top:743.6px" width="6" height="3.500" viewBox="0 0 6 3.500"><path d="M0 0h6L3 3.500z" fill="#5f6368"/></svg>
<div class="t" style="left:283.5px;top:739.8px;font-size:11px;letter-spacing:0.65px"><span style="color:#188038">Home Maintenance</span></div>
<svg class="abs" style="left:396.5px;top:743.6px" width="6" height="3.500" viewBox="0 0 6 3.500"><path d="M0 0h6L3 3.500z" fill="#188038"/></svg>
<svg class="abs" style="left:1203px;top:738px" width="15" height="16" viewBox="0 0 15 16"><path d="M1.500 0h12a1.500 1.500 0 0 1 1.500 1.500v10a1.500 1.500 0 0 1-1.500 1.500H10l-2.500 3L5 13H1.500A1.500 1.500 0 0 1 0 11.500v-10A1.500 1.500 0 0 1 1.500 0z" fill="#555"/><path d="M7.500 2.500l1.200 2.800 2.800 1.200-2.800 1.200-1.200 2.800-1.200-2.800-2.800-1.200 2.800-1.200z" fill="#fff"/></svg>
<svg class="abs" style="left:1252.5px;top:742px" width="6" height="9" viewBox="0 0 6 9" fill="none" stroke="#555" stroke-width="1.300"><path d="M5 .700L1.200 4.500 5 8.300"/></svg>
</div>
<div class="ln" style="left:91.50px;top:237.00px;width:3.2px;height:427.60px"></div>
<div class="ln" style="left:93.30px;top:513.90px;width:24.70px;height:3.2px"></div>
<div class="ln" style="left:93.30px;top:588.90px;width:24.70px;height:3.2px"></div>
<div class="ln" style="left:93.30px;top:661.40px;width:24.70px;height:3.2px"></div>
<div class="ln" style="left:220.50px;top:267.00px;width:3.2px;height:367.50px"></div>
<div class="ln" style="left:1130.00px;top:238.00px;width:3.2px;height:251.80px"></div>
<div class="ln" style="left:884.60px;top:456.45px;width:248.60px;height:3.2px"></div>
<div class="ln" style="left:884.60px;top:458.00px;width:3.2px;height:34.30px"></div>
<div class="ln" style="left:379.20px;top:959.60px;width:3.2px;height:117.40px"></div>
<div class="bl" style="left:180.10px;top:975.00px;width:3.2px;height:137.00px"></div>
<div class="bl" style="left:181.70px;top:1052.40px;width:784.10px;height:3.2px"></div>
<div class="bl" style="left:536.40px;top:995.20px;width:3.2px;height:58.80px"></div>
<div class="bl" style="left:962.50px;top:995.20px;width:3.2px;height:60.50px"></div>
</body></html>
